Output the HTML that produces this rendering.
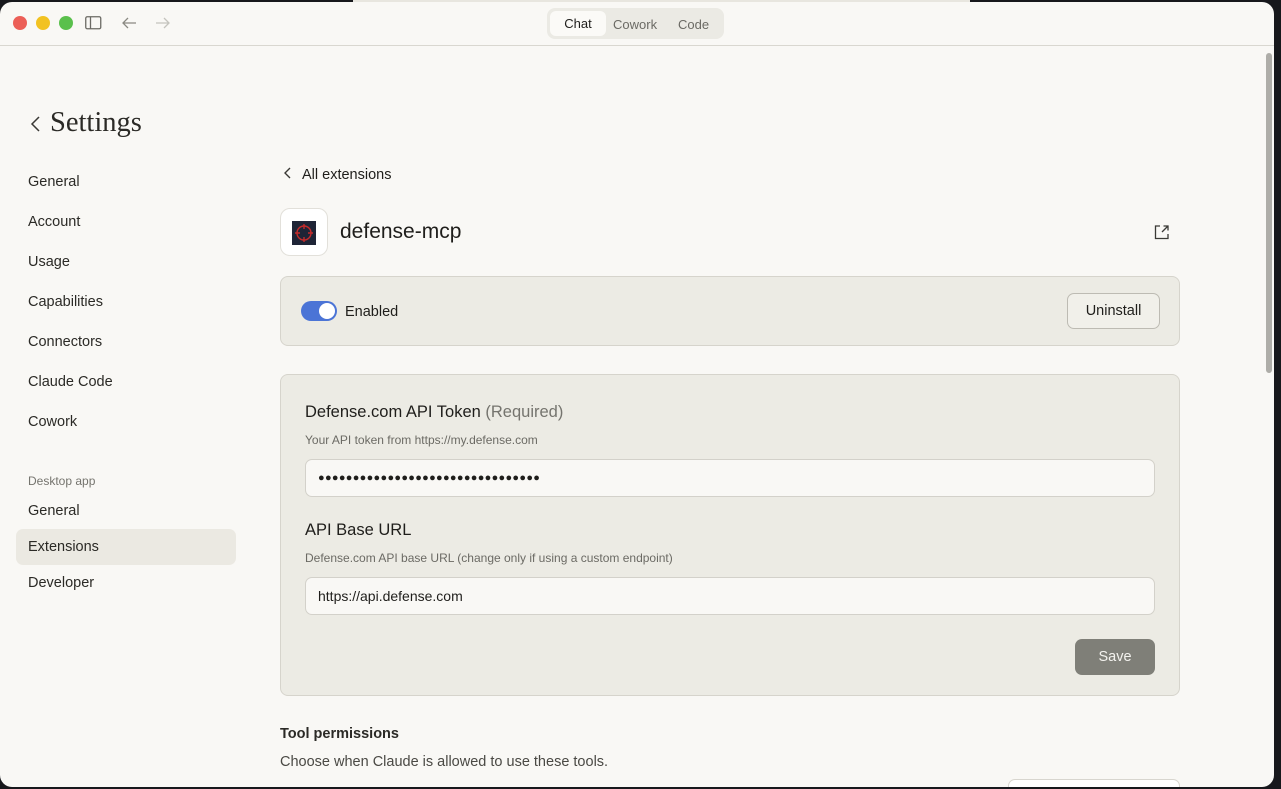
<!DOCTYPE html>
<html><head><meta charset="utf-8"><style>
*{box-sizing:border-box;margin:0;padding:0}
body{width:1281px;height:789px;background:#17181c;font-family:"Liberation Sans",sans-serif;color:#1f1e1b;position:relative;overflow:hidden}
.topbar{position:absolute;left:353px;top:0;width:617px;height:2px;background:#e8e6df}
.win{position:absolute;left:0;top:2px;width:1274px;height:785px;background:#f9f8f5;border-radius:12px;overflow:hidden}
.title{height:44px;border-bottom:1px solid #d9d7d0;position:relative}
.dot{position:absolute;top:14px;width:14px;height:14px;border-radius:50%}
.abs{position:absolute}
.seg{position:absolute;left:547px;top:6px;width:177px;height:31px;background:#ebeae4;border-radius:8px}
.seg span{position:absolute;top:9px;font-size:13px;color:#6b6a64}
.seg .on{left:3px;top:3px;width:56px;height:25px;background:#fbfaf7;border-radius:6px;color:#1f1e1b;text-align:center;line-height:26px;font-size:13px}
.nav div{position:absolute;left:28px;font-size:14.5px;color:#2b2a26}
.card{position:absolute;left:280px;width:900px;background:#ecebe4;border:1px solid #d6d4cc;border-radius:8px}
.inp{position:absolute;left:24px;width:850px;height:38px;background:#f9f8f5;border:1px solid #d3d1ca;border-radius:7px;font-size:14px;padding-left:12px;line-height:36px}
</style></head><body>
<div class="topbar"></div>
<div class="win">
 <div class="title">
  <div class="dot" style="left:13px;background:#ec5f57"></div>
  <div class="dot" style="left:36px;background:#f2c221"></div>
  <div class="dot" style="left:59px;background:#5ac04c"></div>
  <svg class="abs" style="left:85px;top:14px" width="17" height="14"><rect x="0.75" y="0.75" width="15" height="12" rx="1.5" fill="none" stroke="#6b6a64" stroke-width="1.3"/><line x1="5.5" y1="1" x2="5.5" y2="13" stroke="#6b6a64" stroke-width="1.3"/></svg>
  <svg class="abs" style="left:121px;top:14px" width="16" height="14"><path d="M15 7H2M7 2L2 7l5 5" fill="none" stroke="#8a8982" stroke-width="1.3"/></svg>
  <svg class="abs" style="left:155px;top:14px" width="16" height="14"><path d="M1 7h13M9 2l5 5-5 5" fill="none" stroke="#c4c3bd" stroke-width="1.3"/></svg>
  <div class="seg"><div class="on abs">Chat</div><span style="left:66px">Cowork</span><span style="left:131px">Code</span></div>
 </div>
 <div class="abs" style="left:1266px;top:51px;width:6px;height:320px;background:#aeada8;border-radius:3px"></div>
 <svg class="abs" style="left:30px;top:113px" width="12" height="18"><path d="M9 2L2 9l7 7" fill="none" stroke="#3a3935" stroke-width="1.5"/></svg>
 <div class="abs" style="left:50px;top:105px;font-family:'Liberation Serif',serif;font-size:28.5px;color:#2b2a26">Settings</div>
 <div class="nav">
  <div style="top:172px">General</div><div style="top:212px">Account</div><div style="top:252px">Usage</div>
  <div style="top:292px">Capabilities</div><div style="top:332px">Connectors</div><div style="top:372px">Claude Code</div>
  <div style="top:412px">Cowork</div>
  <div style="top:472px;font-size:12px;color:#75746e">Desktop app</div>
  <div style="top:501px">General</div>
  <div style="left:16px;top:527px;width:220px;height:36px;background:#ebe9e2;border-radius:7px;padding:10px 12px">Extensions</div>
  <div style="top:573px">Developer</div>
 </div>
 <svg class="abs" style="left:283px;top:164px" width="10" height="14"><path d="M7 2L2 7l5 5" fill="none" stroke="#3a3935" stroke-width="1.4"/></svg>
 <div class="abs" style="left:302px;top:165px;font-size:14.5px">All extensions</div>
 <div class="abs" style="left:280px;top:206px;width:48px;height:48px;background:#fff;border:1px solid #e2e0da;border-radius:10px">
  <svg class="abs" style="left:11px;top:12px" width="24" height="24"><rect width="24" height="24" fill="#1e2436"/><circle cx="12" cy="12" r="7" fill="none" stroke="#c42b2b" stroke-width="1.4"/><path d="M12 3v5M12 16v5M3 12h5M16 12h5" stroke="#c42b2b" stroke-width="1.4"/></svg>
 </div>
 <div class="abs" style="left:340px;top:218px;font-size:21px">defense-mcp</div>
 <svg class="abs" style="left:1154px;top:222px" width="16" height="16"><path d="M6 2H1.5v12.5H14V10" fill="none" stroke="#3a3935" stroke-width="1.3"/><path d="M8 8l6-6M9.5 2H14v4.5" fill="none" stroke="#3a3935" stroke-width="1.3"/></svg>
 <div class="card" style="top:274px;height:70px">
  <div class="abs" style="left:20px;top:24px;width:36px;height:20px;background:#4b74d6;border-radius:10px"><div class="abs" style="left:18px;top:2px;width:16px;height:16px;background:#fff;border-radius:50%"></div></div>
  <div class="abs" style="left:64px;top:27px;font-size:14.5px">Enabled</div>
  <div class="abs" style="left:786px;top:16px;width:93px;height:36px;border:1px solid #bdbbb3;border-radius:7px;background:#f1f0ea;text-align:center;line-height:35px;font-size:14.5px">Uninstall</div>
 </div>
 <div class="card" style="top:372px;height:322px">
  <div class="abs" style="left:24px;top:28px;font-size:16.5px">Defense.com API Token <span style="color:#75746e">(Required)</span></div>
  <div class="abs" style="left:24px;top:58px;font-size:12px;color:#6b6a64">Your API token from https://my.defense.com</div>
  <div class="inp" style="top:84px;font-size:11px;letter-spacing:0.3px">●●●●●●●●●●●●●●●●●●●●●●●●●●●●●●●●</div>
  <div class="abs" style="left:24px;top:146px;font-size:16.5px">API Base URL</div>
  <div class="abs" style="left:24px;top:176px;font-size:12px;color:#6b6a64">Defense.com API base URL (change only if using a custom endpoint)</div>
  <div class="inp" style="top:202px">https://api.defense.com</div>
  <div class="abs" style="left:794px;top:264px;width:80px;height:36px;background:#7f7f78;border-radius:7px;color:#f3f2ee;text-align:center;line-height:36px;font-size:14.5px">Save</div>
 </div>
 <div class="abs" style="left:280px;top:724px;font-size:14.5px;font-weight:bold;color:#2b2a26">Tool permissions</div>
 <div class="abs" style="left:280px;top:752px;font-size:14.5px;color:#4a4944">Choose when Claude is allowed to use these tools.</div>
 <div class="abs" style="left:1008px;top:777px;width:172px;height:30px;background:#fff;border:1px solid #d8d6cf;border-radius:7px"></div>
</div>
</body></html>
